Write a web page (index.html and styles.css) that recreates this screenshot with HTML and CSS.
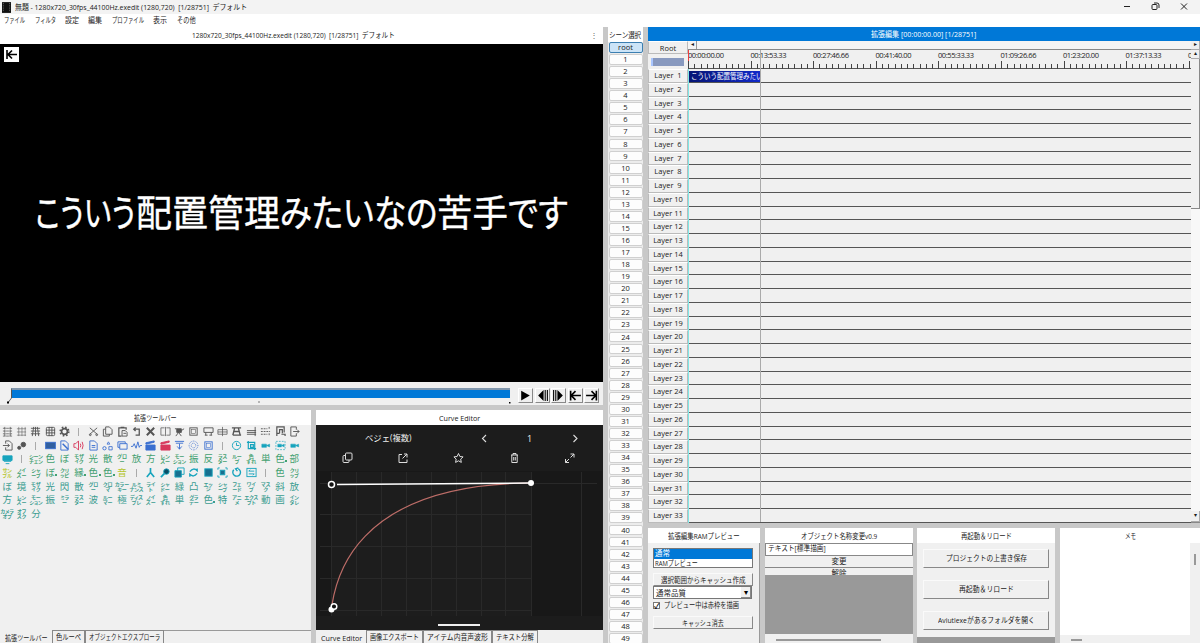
FILE: index.html
```html
<!DOCTYPE html>
<html lang="ja">
<head>
  <meta charset="UTF-8">
  <title>無題 - AviUtl</title>
  <link rel="stylesheet" href="styles.css">
</head>
<body>
  <header class="titlebar">
    <svg class="app-icon" viewBox="0 0 10 12"><rect width="10" height="12" fill="#111"/><path d="M1.5 1v10M8.5 1v10" stroke="#777" stroke-dasharray="1 1"/></svg>
    <span data-w="232">無題 - 1280x720_30fps_44100Hz.exedit (1280,720)&nbsp; [1/28751]&nbsp; デフォルト</span>
    <svg class="window-buttons" viewBox="0 0 80 14" fill="none" stroke="#222"><path d="M4 6.500h6"/><rect x="32" y="4.500" width="5" height="5" rx="1"/><path d="M34 3h3q2 0 2 2v3M61 3.500l6 6M67 3.500l-6 6"/></svg>
  </header>
  <nav class="menubar">
    <span data-w="21">ファイル</span><span data-w="21">フィルタ</span><span data-w="14">設定</span><span data-w="14">編集</span><span data-w="32">プロファイル</span><span data-w="14">表示</span><span data-w="19">その他</span>
  </nav>

  <main class="workspace">
    <div class="left">
      <section class="preview">
        <div class="panel-title"><span data-w="203">1280x720_30fps_44100Hz.exedit (1280,720)&nbsp; [1/28751]&nbsp; デフォルト</span><i class="dots">⋮</i></div>
        <div class="screen">
          <svg class="corner" viewBox="0 0 15 15"><rect width="15" height="15" fill="#fff"/><path d="M3 3v9M4 7.500h9M8 3.500l-4 4 4 4" fill="none" stroke="#000" stroke-width="1.600"/></svg>
          <span data-w="100">こういう</span><span data-w="144">配置管理</span><span data-w="157">みたいなの</span><span data-w="71">苦手</span><span data-w="60">です</span>
        </div>
        <div class="player">
          <div class="seek">
            <div class="seek-bar"></div>
            <svg viewBox="0 0 511 6"><path d="M8.500 4L11.500 0" stroke="#666" fill="none"/><path d="M7 3.500h2v2h-2zM258.500 3.500h1v1h-1zM509 4h1.500v1.500h-1.500z"/></svg>
          </div>
          <button><svg viewBox="1 1 12 12"><path d="M3 2.500l8 4.500-8 4.500z"/></svg></button>
          <button><svg viewBox="1 1 12 12"><path d="M8 2v10L3 7zM9 2h1v10h-1zM11 2h1v10h-1z"/></svg></button>
          <button><svg viewBox="1 1 12 12"><path d="M6 2v10l5-5zM2 2h1v10h-1zM4 2h1v10h-1z"/></svg></button>
          <button><svg viewBox="1 1 12 12"><path d="M2.500 2.500v9M3 7h9M7 3L3 7l4 4" fill="none" stroke="#000" stroke-width="1.500"/></svg></button>
          <button><svg viewBox="1 1 12 12"><path d="M11.500 2.500v9M2 7h9M7 3l4 4-4 4" fill="none" stroke="#000" stroke-width="1.500"/></svg></button>
        </div>
      </section>

      <div class="left-bottom">
        <section class="toolbox">
          <div class="panel-title"><span data-w="43">拡張ツールバー</span></div>
          <div class="tools" id="tools"></div>
          <div class="tabs"><b><span data-w="43">拡張ツールバー</span></b><a><span data-w="25">色ルーペ</span></a><a><span data-w="71">オブジェクトエクスプローラ</span></a><i class="tab-line"></i></div>
        </section>

        <section class="curve">
          <div class="panel-title"><span data-w="41">Curve Editor</span></div>
          <div class="curve-body">
            <div class="curve-name"><span data-w="47">ベジェ(複数)</span>
              <svg viewBox="0 0 100 12" fill="none" stroke="#ddd" stroke-width="1.100"><path d="M5 3L1.500 6.500 5 10M92.500 3L96 6.500 92.500 10"/><text x="48.500" y="9.500" fill="#eee" stroke="none" font-size="9" text-anchor="middle">1</text></svg>
            </div>
            <svg class="curve-icons" viewBox="0 0 286 14" fill="none" stroke="#ddd">
              <rect x="29.500" y="2" width="6.500" height="7" rx="1"/><path d="M29.500 4.500h-1.500q-1 0-1 1v5q0 1 1 1h4q1 0 1-1V9"/>
              <path d="M86 3.500h-3v8h8v-3M88 3h3v3.500M91 3l-4.500 4.500"/>
              <path d="M142.500 2.500l1.400 3 3.200.4-2.400 2.200.6 3.300-2.800-1.600-2.900 1.600.6-3.300-2.300-2.200 3.200-.4z"/>
              <path d="M195 4h7M197 4V2.500h3V4M195.800 4v7.500h5.400V4M197.700 6v3.500M199.300 6v3.500"/>
              <path d="M254.500 3h3.500v3.500M258 3l-3.500 3.500M253 8l-3.500 3.500M249.500 8v3.500h3.500"/>
            </svg>
            <svg class="graph" viewBox="316 471 286 145">
              <rect x="316" y="471" width="286" height="145" fill="#181818"/>
              <rect x="331" y="472" width="200" height="144" fill="#1d1d1d"/>
              <path d="M331.500 472v144M356.500 472v144M381.500 472v144M406.500 472v144M431.500 472v144M456.500 472v144M481.500 472v144M505.500 472v144M531.500 472v144M581.500 472v144M320 483.500h277M320 514.500h211M320 546.500h211M320 578.500h211M320 610.500h211" stroke="#292929"/>
              <path d="M331 609.500C334 606 331 484 531 483" fill="none" stroke="#bd6d68" stroke-width="1.200"/>
              <path d="M337 484.500L531 483" stroke="#fff" stroke-width="1.500"/>
              <circle cx="531" cy="483" r="3" fill="#fff"/><circle cx="331.500" cy="609.500" r="3" fill="#fff"/>
              <circle cx="331.500" cy="484.500" r="3" fill="#111" stroke="#fff" stroke-width="1.500"/><circle cx="334" cy="606.500" r="2.800" fill="#111" stroke="#fff" stroke-width="1.500"/>
            </svg>
            <div class="handle"></div>
          </div>
          <div class="tabs"><b><span data-w="41">Curve Editor</span></b><a><span data-w="49">画像エクスポート</span></a><a><span data-w="61">アイテム内音声波形</span></a><a><span data-w="38">テキスト分解</span></a></div>
        </section>
      </div>
    </div>

    <section class="scenes" id="scenes">
      <div class="panel-title"><span data-w="32">シーン選択</span></div>
      <button class="scene selected">root</button>
    </section>

    <div class="right">
      <section class="timeline">
        <div class="timeline-title"><span data-w="105">拡張編集 [00:00:00.00] [1/28751]</span></div>
        <div class="timeline-body">
          <div class="layer-names" id="layer-names">
            <div class="root-button">Root</div>
            <div class="zoom-bar"><i></i></div>
          </div>
          <div class="tracks">
            <div class="hscroll"><i>◂</i></div>
            <svg class="ruler" id="ruler" viewBox="0 0 503 19"></svg>
            <div class="rows" id="rows"></div>
            <div class="end-line"></div>
            <div class="clip"><span data-w="72">こういう配置管理みたい</span></div>
          </div>
          <div class="vscroll"><i>▸</i><i>▴</i><div class="thumb"></div><i class="down">▾</i></div>
        </div>
      </section>

      <div class="right-bottom">
        <section class="ram">
          <div class="panel-title"><span data-w="72">拡張編集RAMプレビュー</span></div>
          <div class="ram-body">
            <div class="listbox"><div class="on"><span data-w="15">通常</span></div><div><span data-w="43">RAMプレビュー</span></div></div>
            <button><span data-w="85">選択範囲からキャッシュ作成</span></button>
            <div class="select"><span data-w="30">通常品質</span><i>▾</i></div>
            <label><i class="check">✓</i><span data-w="75">プレビュー中は赤枠を描画</span></label>
            <button><span data-w="42">キャッシュ消去</span></button>
          </div>
        </section>
        <section class="rename">
          <div class="panel-title"><span data-w="76">オブジェクト名称変更v0.9</span></div>
          <div class="rename-input"><span data-w="58">テキスト[標準描画]</span></div>
          <div class="rename-button"><span data-w="15">変更</span></div>
          <div class="rename-button cut"><span data-w="15">解除</span></div>
          <div class="rename-fill"></div>
          <div class="rename-scroll"><i></i></div>
        </section>
        <section class="restart">
          <div class="panel-title"><span data-w="51">再起動＆リロード</span></div>
          <div class="restart-body">
            <button><span data-w="81">プロジェクトの上書き保存</span></button>
            <button><span data-w="55">再起動＆リロード</span></button>
            <button><span data-w="97">Aviutlexeがあるフォルダを開く</span></button>
          </div>
        </section>
        <section class="memo">
          <div class="panel-title"><span data-w="11">メモ</span></div>
          <div class="memo-body"><div class="memo-text"></div><i class="memo-v"></i></div>
          <div class="memo-scroll"><i></i></div>
        </section>
      </div>
    </div>
  </main>
  <script src="script.js"></script>
</body>
</html>
```
FILE: styles.css
```css
* {
  box-sizing: border-box;
}
body {
  margin: 0;
  width: 1200px;
  height: 643px;
  overflow: hidden;
  display: flex;
  flex-direction: column;
  font-family: "Open Sans", "Noto Sans CJK JP", sans-serif;
  font-size: 7.5px;
  line-height: 10px;
  color: #1a1a1a;
  background: #c8c8c8;
}
i {
  font-style: normal;
}
svg {
  display: block;
}
button {
  font: inherit;
  color: inherit;
  padding: 0;
  margin: 0;
}
[data-w] {
  display: inline-block;
  white-space: nowrap;
  transform-origin: left center;
  flex: none;
}
.titlebar {
  height: 14px;
  flex: none;
  display: flex;
  align-items: center;
  background: #f3f3f3;
  padding-left: 2px;
}
.app-icon {
  width: 9px;
  height: 11px;
  margin-right: 4px;
}
.window-buttons {
  width: 80px;
  height: 14px;
  margin-left: auto;
}
.menubar {
  height: 13px;
  flex: none;
  display: flex;
  align-items: center;
  gap: 9.5px;
  padding: 0 0 1px 4px;
  background: #fff;
}
.workspace {
  flex: 1;
  display: flex;
  gap: 5px;
  min-height: 0;
}
.panel-title {
  height: 15px;
  flex: none;
  display: flex;
  align-items: center;
  justify-content: center;
  background: #fff;
  position: relative;
}

/* preview */
.left {
  width: 603px;
  display: flex;
  flex-direction: column;
  gap: 5px;
}
.preview {
  width: 603px;
}
.preview .panel-title {
  height: 17px;
  padding: 0 17px 2px 0;
}
.dots {
  position: absolute;
  right: 5px;
  color: #666;
}
.screen {
  height: 338px;
  background: #000;
  color: #fff;
  font-size: 37px;
  line-height: 54px;
  font-feature-settings: "palt";
  -webkit-text-stroke: 0.4px #fff;
  display: flex;
  align-items: center;
  justify-content: center;
  position: relative;
}
.corner {
  position: absolute;
  left: 4px;
  top: 3px;
  width: 15px;
  height: 15px;
}
.player {
  height: 23px;
  background: #f0f0f0;
  display: flex;
  align-items: center;
  padding: 3px 3px 0 0;
}
.seek {
  width: 511px;
  margin-right: 7px;
  padding-top: 2px;
}
.seek-bar {
  height: 10px;
  margin: 0 1px 0 11px;
  background: #0078d7;
  border-top: 2px solid #8298ae;
  border-left: 1px solid #555;
}
.seek svg {
  width: 511px;
  height: 6px;
}
.player button {
  width: 15px;
  height: 15px;
  margin-right: 1.5px;
  flex: none;
  border: 1px solid;
  border-color: #fff #888 #888 #fff;
  background: #efefef;
}
.player button svg {
  width: 13px;
  height: 13px;
}

/* toolbar panel */
.left-bottom {
  flex: 1;
  display: flex;
  gap: 5px;
}
.toolbox {
  width: 311px;
  display: flex;
  flex-direction: column;
  background: #f0f0f0;
}
.tools {
  flex: 1;
  display: grid;
  grid-template-columns: repeat(21, 14.36px);
  grid-auto-rows: 13.7px;
  align-content: start;
}
.tool {
  display: flex;
  align-items: center;
  justify-content: center;
  text-align: center;
  color: #3c9d90;
  position: relative;
}
.tool svg {
  width: 11px;
  height: 11px;
  fill: none;
  stroke: currentColor;
}
.tool.kanji {
  font-size: 9.5px;
}
.tool.plus::after {
  content: "";
  position: absolute;
  right: 0;
  bottom: 4px;
  width: 2px;
  height: 2px;
  background: currentColor;
}
.tool.kana {
  font-size: 5px;
  line-height: 4.8px;
  font-weight: bold;
  white-space: pre;
  font-feature-settings: "palt";
}
.green { color: #43a070; }
.lime { color: #b4c52e; }
.gray { color: #555; }
.blue { color: #3a6fd0; }
.red { color: #d8385c; }
.cyan { color: #17a4bd; }
.tool.green { color: #43a070; }
.tool.lime { color: #b4c52e; }
.tool.gray { color: #555; }
.tool.blue { color: #3a6fd0; }
.tool.red { color: #d8385c; }
.tool.cyan { color: #17a4bd; }
.tool.sep::before {
  content: "";
  width: 1px;
  height: 8px;
  background: #aaa;
}
.tabs {
  height: 13px;
  flex: none;
  display: flex;
  align-items: stretch;
  background: #f0f0f0;
}
.tabs b {
  font-weight: normal;
  padding: 3px 4px 0 5px;
}
.tabs a {
  padding: 1px 3px 0;
  border: 1px solid #888;
  border-width: 1px 1.5px 0 1px;
}
.tab-line {
  flex: 1;
  border-top: 1px solid #999;
}

/* curve editor */
.curve {
  width: 287px;
  display: flex;
  flex-direction: column;
}
.curve-body {
  height: 205px;
  background: #1c1c1c;
  color: #eee;
}
.curve-name {
  display: flex;
  align-items: center;
  height: 26px;
  padding-left: 49px;
  font-size: 8.5px;
}
.curve-name svg {
  width: 100px;
  height: 12px;
  margin-left: 69px;
}
.curve-icons {
  width: 286px;
  height: 14px;
  margin-bottom: 6px;
}
.graph {
  width: 286px;
  height: 145px;
}
.handle {
  width: 42px;
  height: 2px;
  margin: 8px 0 0 122px;
  background: #eee;
}

/* scene list */
.scenes {
  width: 35px;
  background: #ececec;
}
.scenes .panel-title {
  height: 15px;
}
.scene {
  display: block;
  width: 34px;
  height: 10.88px;
  margin: 0 0 1.2px 0.5px;
  line-height: 9px;
  text-align: center;
  background: #fdfdfd;
  border: 1px solid #d0d0d0;
  border-radius: 2px;
}
.scene.selected {
  background: #cce4f7;
  border-color: #3c7fb1;
}

/* timeline */
.right {
  width: 552px;
  display: flex;
  flex-direction: column;
  gap: 5px;
}
.timeline {
  height: 496px;
  background: #f0f0f0;
  border-bottom: 1px solid #888;
}
.timeline-title {
  height: 14px;
  background: #0078d7;
  color: #fff;
  display: flex;
  align-items: center;
  justify-content: center;
}
.timeline-body {
  display: flex;
  height: 481px;
}
.layer-names {
  width: 40px;
}
.root-button {
  height: 13px;
  text-align: center;
  line-height: 12px;
  border: 1px solid #bbb;
  border-top-color: #fff;
}
.zoom-bar {
  height: 15px;
  padding: 4px 4px 3px 3px;
}
.zoom-bar i {
  display: block;
  height: 8px;
  background: #8899bf;
  border-left: 2px solid #a9c6ff;
}
.layer-name {
  height: 13.75px;
  line-height: 11px;
  text-align: center;
  white-space: pre;
  border: 1px solid #bbb;
  border-top-color: #fff;
}
.tracks {
  width: 503px;
  position: relative;
}
.hscroll {
  height: 9px;
  border-bottom: 1px solid #888;
  background: #f4f4f4;
}
.hscroll i {
  display: block;
  width: 9px;
  height: 8px;
  font-size: 6px;
  line-height: 7px;
  text-align: center;
  border-right: 1px solid #999;
}
.ruler {
  width: 503px;
  height: 19px;
  font-size: 7.5px;
}
.rows {
  border-left: 1px solid #7fe6e6;
}
.row {
  height: 13.75px;
  border-bottom: 1px solid #555;
}
.end-line {
  position: absolute;
  left: 72px;
  top: 9px;
  bottom: 0;
  width: 1px;
  background: #aaa;
}
.clip {
  position: absolute;
  left: 1px;
  top: 30px;
  width: 71px;
  height: 11px;
  overflow: hidden;
  background: linear-gradient(90deg, #061575, #1029c9);
  color: #fff;
  padding-left: 2px;
}
.vscroll {
  width: 9px;
  margin-left: auto;
  display: flex;
  flex-direction: column;
  background: #f8f8f8;
}
.vscroll i {
  height: 9px;
  font-size: 6px;
  line-height: 7px;
  text-align: center;
  background: #f0f0f0;
  border: 1px solid #aaa;
  border-width: 0 1px 1px 0;
}
.thumb {
  height: 150px;
  background: #f0f0f0;
  border: 1px solid #888;
  border-width: 0 1px 1px 0;
}
.vscroll .down {
  margin-top: auto;
  height: 11px;
  line-height: 9px;
}

/* lower right panels */
.right-bottom {
  flex: 1;
  display: flex;
}
.right-bottom section {
  display: flex;
  flex-direction: column;
  background: #f0f0f0;
}
.right-bottom button {
  border: 1px solid;
  border-color: #fafafa #888 #888 #fafafa;
  background: #f0f0f0;
}
.ram {
  width: 112px;
  margin-right: 5px;
}
.ram-body {
  flex: 1;
  padding: 5px 6px 0 5px;
  border-right: 1.5px solid #999;
}
.listbox {
  height: 20px;
  background: #fff;
  border: 1px solid #777;
  line-height: 9px;
}
.listbox div {
  height: 9.5px;
  padding-left: 1px;
}
.listbox .on {
  color: #fff;
  background: #0078d7;
}
.ram button {
  display: block;
  width: 100px;
  height: 13px;
  margin-top: 5px;
}
.select {
  display: flex;
  width: 99px;
  height: 13px;
  background: #fff;
  border: 1px solid #777;
  padding-left: 2px;
  align-items: center;
}
.select i {
  width: 10px;
  height: 11px;
  margin-left: auto;
  text-align: center;
  color: #000;
  background: #f0f0f0;
  border: 1px solid #888;
  border-width: 0 1px 1px 0;
}
.ram label {
  display: flex;
  align-items: center;
  gap: 4px;
  height: 12px;
}
.check {
  width: 7px;
  height: 7px;
  line-height: 6px;
  background: #fff;
  border: 1px solid #777;
  color: #000;
  font-weight: bold;
}
.rename {
  width: 148px;
  margin-right: 4px;
}
.rename-input {
  height: 13px;
  padding-left: 2px;
  line-height: 9px;
  background: #fff;
  border: 1px solid #888;
}
.rename-button {
  height: 12px;
  line-height: 10px;
  text-align: center;
  border-bottom: 1px solid #888;
}
.rename-button.cut {
  height: 7px;
  overflow: hidden;
  border: 0;
}
.rename-fill {
  height: 59px;
  background: #999;
}
.rename-scroll {
  padding: 5px 0 0 11px;
}
.rename-scroll i,
.memo-scroll i {
  display: block;
  width: 105px;
  height: 2px;
  background: #999;
}
.restart {
  width: 138px;
  margin-right: 5px;
}
.restart-body {
  height: 94px;
  padding: 6px;
  display: flex;
  flex-direction: column;
  gap: 12px;
}
.restart button {
  width: 126px;
  height: 19px;
  padding-bottom: 2px;
}
.right-bottom .restart {
  background: #999;
}
.right-bottom .restart-body {
  background: #f0f0f0;
}
.memo {
  width: 140px;
}
.memo-body {
  display: flex;
  height: 92px;
}
.memo-text {
  width: 130px;
  background: #fff;
}
.memo-v {
  width: 2px;
  height: 11px;
  margin: 11px 0 0 4px;
  background: #999;
}
.memo-scroll {
  padding: 4px 0 0 11px;
}
.memo-scroll i {
  width: 11px;
}
```
FILE: script.js
```js
// icon shapes on a 12x12 grid
const icons = {
  rows: '<path d="M1 2.500h10M1 5.500h10M1 8.500h10M1 11h10M3 1v10M9 1v10" stroke-dasharray="3 .5" stroke-width=".8"/>',
  grid: '<path d="M1 3h10M1 6.500h10M1 10h10M3 1v10M6.500 1v10M10 1v10" stroke-width=".6"/>',
  slant: '<path d="M1 2.500h10M1 5.500h10M1 8.500h10M4 1L2.500 11M6 1v10M8 1l1.500 10"/>',
  mesh: '<rect x="1.500" y="1.500" width="9" height="9" rx="1"/><path d="M1 4.500h10M1 7.500h10M4.500 1v10M7.500 1v10"/>',
  gear: '<circle cx="6" cy="6" r="3.200" stroke-width="1.800"/><circle cx="6" cy="6" r="4.700" stroke-width="1.700" stroke-dasharray="1.800 1.900"/>',
  cut: '<path d="M2 2l8 7M10 2L2 9"/><circle cx="2.500" cy="9.500" r="1"/><circle cx="9.500" cy="9.500" r="1"/>',
  copy: '<path d="M4 3.500V1h4l3 3v5H4z"/><path d="M4 3.500H1.500V11H8V9"/>',
  paste: '<path d="M10 4V2H2v9h3M4 1.500h4" stroke-width="1.300"/><path d="M5.500 5H9l2 2v4H5.500zM7 8h3"/>',
  undo: '<path d="M3 3.500h6v6.500H5M5 1.500L3 3.500l2 2" stroke-width="1.400"/>',
  del: '<path d="M2 2l8 8M10 2l-8 8" stroke-width="2.200"/>',
  split: '<path d="M5 2H1v8h4M7 2h4v8H7M6 1v10" stroke-width=".8"/>',
  cam: '<path d="M3 3h5v4H3z" fill="currentColor"/><path d="M8 5l3-2M1 3h2M5 7l-3 4M5 7l3 4"/>',
  monitor: '<path d="M1 2h10v5H1z" fill="currentColor"/><path d="M2 8h8M4 10.500h4"/>',
  box: '<rect x="2" y="2" width="8" height="8"/><rect x="4" y="4" width="4" height="4" stroke-width=".6"/>',
  cart: '<path d="M1 2h10v5H1zM3 7v3M9 7v3M2 10h3M7 10h3"/>',
  cross: '<path d="M1 4h10v5H1zM6 1v10M1 6.500h10" stroke-width=".8"/>',
  film: '<path d="M1 2h10M2 10h9M4 2l-2 8M8 2l2 8M3 6h6" stroke-width="1.500"/>',
  lines: '<path d="M1 5h10M1 7h10M1 9h10M10 1v10"/>',
  dash: '<path d="M1 3h7M1 6h10M1 9h7M10 1v3M10 8v3" stroke-dasharray="2 1"/>',
  find: '<path d="M2 11V1h8v6M5 8V4h3v4M7 9h4v2M2 8h3" stroke-width="1.300"/>',
  exit: '<path d="M8 4V1H2v10h6V8M4.500 6H11M9 4l2 2-2 2"/>',
  enter: '<path d="M4 4V1h4l3 3v7H4V8M1 6h7M6 4l2 2-2 2"/>',
  blob: '<circle cx="3.500" cy="8.500" r="1.700" fill="currentColor"/><circle cx="8" cy="5" r="2.500" fill="currentColor"/>',
  rect: '<rect x=".7" y="2.500" width="10.600" height="7" fill="#315f9f"/>',
  pen: '<path d="M2 1h5l3 3v7H2z"/><path d="M4 4l6 6" stroke-width="1.600"/>',
  sound: '<path d="M1 4h2l3-3v10L3 8H1zM8 4q1 2 0 4M10 2q2 4 0 8"/>',
  doc: '<path d="M2 1h5l3 3v7H2zM4 6h4M4 8h4"/>',
  shapes: '<circle cx="2.700" cy="9" r="1.800"/><path d="M7.500 7.200h3.600v3.600H7.500zM7 2l1.500 2.500h-3z" stroke-width=".9"/>',
  rects: '<path d="M1 2h8v2M3 4h8v6H3zM1 2v6h2"/>',
  wave: '<path d="M0 7h2l1.500-3 2 5 2-7 1.500 6 1-2h2"/>',
  clap: '<path d="M1 5.500h10V11H1zM1 3l9-2v1.500L1 4.500z" fill="currentColor"/>',
  down: '<path d="M1 1.500h10M2 3.500h8M6 4v6M3.500 7L6 10l2.500-3"/>',
  dots: '<circle cx="6" cy="6" r="4.800" stroke-dasharray=".8 1"/><circle cx="6" cy="6" r="2.500" stroke-dasharray=".8 1"/>',
  clock: '<circle cx="6" cy="6" r="4.500"/><path d="M6 3v3h3"/>',
  crop: '<path d="M1 2.500h8.500V11M2.500 1v8.500H11M5 5h3v3H5z" stroke-width="1.300"/>',
  video: '<path d="M2 4.500h5v3.500H2zM7 6l3.500-1.500v3z" fill="currentColor" stroke-width=".6"/>',
  frame: '<path d="M3 4.500h4v3H3zM7 6l3-1.500v3z" fill="currentColor" stroke-width=".5"/><path d="M1 1.500h10v9H1z" stroke-width=".7" stroke-dasharray="2 1.200"/>',
  axis: '<path d="M6 1v5L2 11M6 6l4 5" stroke-width="1.800"/>',
  mag: '<circle cx="7" cy="5" r="3" fill="#0a4d66"/><path d="M5 7l-4 4" stroke-width="2"/>',
  stack: '<path d="M4 1h7v7H4z"/><path d="M1 4h7v7H1z" fill="#176f8f"/>',
  sync: '<path d="M2 5q4-5 8-1V1.500M10 7q-4 5-8 1v2.500" stroke-width="1.500"/>',
  fill: '<rect x="2" y="2" width="8" height="8" fill="#176f8f"/>',
  expand: '<rect x="3.500" y="3.500" width="5" height="5" fill="#176f8f"/><path d="M1 3V1h2M9 1h2v2M11 9v2H9M3 11H1V9"/>',
  turn: '<path d="M3 3a4.200 4.200 0 1 0 5-1M7 4.500L5 2l3-1" stroke-width="1.500"/>',
  swap: '<rect x="1" y="1.500" width="10" height="9"/><path d="M3 4.500h6M3 7.500h6M4.500 3L3 4.500M7.500 9L9 7.500"/>'
};

// @name:colour is an icon, | a separator, a slash breaks small kana into two lines
const toolRows = [
  '@rows:gray @grid:gray @slant:gray @mesh:gray @gear:gray | @cut:gray @copy:gray @paste:gray @undo:gray @del:gray @split:gray @cam:gray @box:gray @cart:gray @cross:gray @film:gray @lines:gray @dash:gray @find:gray @exit:gray',
  '@enter:gray @blob:gray | @rect:blue @pen:blue @sound:red @doc:blue @shapes:blue @rects:blue @wave:blue @clap:blue @clap:red @down:blue @dots:blue @box:blue | @clock:cyan @crop:cyan @video:cyan @frame:cyan @video:cyan',
  '@monitor:cyan | シーン/チェン 色 ぼ モザ/イク 光 散 グロ/ー 放 方 レン/ズー モー/ション 振 反 ラス/ター ルー/プ 色/ずれ 単 色+ 部',
  'サン/プル:lime ノイ/ズー シャ/ープ ぼ+ クリ/ッピ 縁+ 色+ 色+ 音:lime | @axis:cyan @mag:cyan @stack:cyan @sync:cyan @fill:cyan @expand:cyan @turn:cyan @swap:cyan | 色 クリ/ップ',
  'ぼ 境 モザ/イク 光 閃 散 グロ/ー クロ/マ カラー/キー ルミ/ナンス ライ/ト シャ/ドー 緑 凸 エッ/ジ シャ/ープ フェ/ード ワイ/プ マス/ク 斜 放',
  '方 レン/ズー モー/ション 振 ミラ/ー ラス/ター 波 ルー/マー 極 ディス/プレ ノイ/ズー 色/ずれ 単 グラ/デー 色+ 特 アニ/メ エクス/プト 動 画 イン/タレ',
  'カメラ/オプ オフ/スク 分'
];
const tools = document.getElementById('tools');
toolRows.forEach((row, r) => {
  row.split(' ').forEach(item => {
    const el = document.createElement('div');
    const [name, colour] = item.split(':');
    el.className = 'tool';
    if (name === '|') {
      el.classList.add('sep');
    } else if (name[0] === '@') {
      el.classList.add(colour);
      el.innerHTML = `<svg viewBox="0 0 12 12">${icons[name.slice(1)]}</svg>`;
    } else {
      el.classList.add(name.includes('/') ? 'kana' : 'kanji');
      if (name.includes('+')) el.classList.add('plus');
      if (colour || r < 4) el.classList.add(colour || 'green');
      el.textContent = name.replace('/', '\n').replace('+', '');
    }
    tools.appendChild(el);
  });
});

const scenes = document.getElementById('scenes');
for (let i = 1; i <= 49; i++) {
  scenes.insertAdjacentHTML('beforeend', `<button class="scene">${i}</button>`);
}

const names = document.getElementById('layer-names');
const rows = document.getElementById('rows');
for (let i = 1; i <= 33; i++) {
  names.insertAdjacentHTML('beforeend', `<div class="layer-name">Layer ${String(i).padStart(2)}</div>`);
  rows.insertAdjacentHTML('beforeend', '<div class="row"></div>');
}

// ruler: ten ticks per label
const times = ['00:00:00.00', '00:13:53.33', '00:27:46.66', '00:41:40.00', '00:55:33.33', '01:09:26.66', '01:23:20.00', '01:37:13.33', '0'];
let marks = '<path d="M0 18.500H503" stroke="#555"/>';
for (let i = 0; i <= 80; i++) {
  const x = Math.round(i * 6.26) + 0.5;
  marks += `<path d="M${x} ${i % 10 ? 14 : 11}V19" stroke="#444"/>`;
}
times.forEach((t, i) => {
  marks += `<text x="${i * 62.5}" y="8" fill="#222"${i < 8 ? ' textLength="36"' : ''}>${t}</text>`;
});
marks += '<path d="M.5 0V11" stroke="#f04040"/>';
document.getElementById('ruler').innerHTML = marks;

// squeeze labels to the width of the UI font
document.querySelectorAll('[data-w]').forEach(el => {
  const want = Number(el.dataset.w);
  const have = el.offsetWidth;
  el.style.transform = `scaleX(${want / have})`;
  el.style.marginRight = `${want - have}px`;
});
```
